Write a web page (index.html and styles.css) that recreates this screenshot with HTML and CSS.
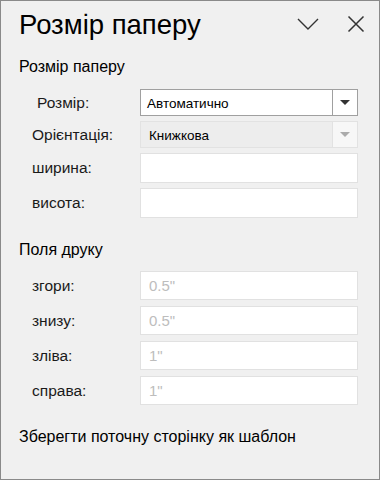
FILE: index.html
```html
<!DOCTYPE html>
<html lang="uk">
<head>
  <meta charset="UTF-8">
  <meta name="viewport" content="width=device-width, initial-scale=1.0">
  <title>Розмір паперу</title>
  <link rel="stylesheet" href="styles.css">
</head>
<body>
  <div class="panel">
    <!-- Заголовок панелі -->
    <div class="panel-header">
      <h1 class="panel-title">Розмір паперу</h1>
      <button class="icon-btn chevron" title="Параметри">
        <svg width="24" height="20" viewBox="0 0 24 20"><polyline points="2,5 12,15 22,5" fill="none" stroke="#333" stroke-width="1.4"/></svg>
      </button>
      <button class="icon-btn close" title="Закрити">
        <svg width="20" height="20" viewBox="0 0 20 20"><path d="M2.5 2.5 L17.5 17.5 M17.5 2.5 L2.5 17.5" fill="none" stroke="#333" stroke-width="1.5"/></svg>
      </button>
    </div>

    <!-- Розмір паперу -->
    <h2 class="section-title">Розмір паперу</h2>
    <div class="form-grid size-grid">
      <label class="field-label indent">Розмір:</label>
      <div class="combo">
        <span class="combo-value">Автоматично</span>
        <span class="combo-arrow"><span class="tri"></span></span>
      </div>

      <label class="field-label">Орієнтація:</label>
      <div class="combo disabled">
        <span class="combo-value">Книжкова</span>
        <span class="combo-arrow"><span class="tri"></span></span>
      </div>

      <label class="field-label">ширина:</label>
      <input class="text-field tall" type="text">

      <label class="field-label">висота:</label>
      <input class="text-field tall" type="text">
    </div>

    <!-- Поля друку -->
    <h2 class="section-title margins-title">Поля друку</h2>
    <div class="form-grid margin-grid">
      <label class="field-label">згори:</label>
      <input class="text-field" type="text" placeholder="0.5&quot;">

      <label class="field-label">знизу:</label>
      <input class="text-field" type="text" placeholder="0.5&quot;">

      <label class="field-label">зліва:</label>
      <input class="text-field" type="text" placeholder="1&quot;">

      <label class="field-label">справа:</label>
      <input class="text-field" type="text" placeholder="1&quot;">
    </div>

    <a href="#" class="save-link">Зберегти поточну сторінку як шаблон</a>
  </div>
</body>
</html>
```

FILE: styles.css
```css
/* Загальне */
body {
  margin: 0;
  font-family: 'Liberation Sans', Arial, sans-serif;
  color: #000;
  background: #f0f0f0;
}

.panel {
  box-sizing: border-box;
  width: 380px;
  height: 480px;
  border: 1px solid #8a8a8a;
  background: #f0f0f0;
  display: flex;
  flex-direction: column;
}

/* Заголовок */
.panel-header {
  height: 48px;
  display: flex;
  align-items: center;
  padding: 0 13px 0 18px;
}

.panel-title {
  margin: 0;
  flex: 1;
  font-size: 27.5px;
  font-weight: normal;
  line-height: 32px;
}

.icon-btn {
  border: none;
  background: none;
  padding: 0;
  display: flex;
  cursor: pointer;
}

.chevron {
  margin-right: 26px;
  margin-top: -2px;
}

.close {
  margin-top: -2px;
}

/* Розділи */
.section-title {
  margin: 8px 0 0 18px;
  font-size: 16px;
  font-weight: normal;
  line-height: 20px;
}

.margins-title {
  margin-top: 22px;
}

.form-grid {
  display: grid;
  grid-template-columns: 108px 1fr;
  align-items: center;
  padding: 0 21px 0 31px;
}

.size-grid {
  margin-top: 12px;
  row-gap: 5px;
}

.margin-grid {
  margin-top: 11px;
  row-gap: 6px;
}

.field-label {
  font-size: 15.5px;
  color: #1a1a1a;
}

.field-label.indent {
  padding-left: 5px;
}

/* Комбобокс */
.combo {
  box-sizing: border-box;
  height: 27px;
  display: flex;
  border: 1px solid #a0a0a0;
  background: #fff;
}

.combo-value {
  flex: 1;
  display: flex;
  align-items: center;
  padding-left: 6px;
  font-size: 13.5px;
  padding-top: 2px;
}

.combo-arrow {
  width: 24px;
  border-left: 1px solid #a0a0a0;
  display: flex;
  align-items: center;
  justify-content: center;
}

.tri {
  width: 0;
  height: 0;
  border-left: 5px solid transparent;
  border-right: 5px solid transparent;
  border-top: 5px solid #333;
}

.combo.disabled {
  border-color: #e2e2e2;
  background: #ededed;
}

.combo.disabled .combo-value {
  padding-left: 8px;
}

.combo.disabled .combo-arrow {
  border-left-color: #e2e2e2;
  background: #f7f7f7;
}

.combo.disabled .tri {
  border-top-color: #ababab;
}

/* Поля вводу */
.text-field {
  box-sizing: border-box;
  width: 100%;
  height: 29px;
  margin: 0;
  border: 1px solid #e1e1e1;
  background: #fff;
  padding: 0 8px;
  font-family: 'Liberation Sans', Arial, sans-serif;
  font-size: 15px;
  outline: none;
}

.text-field.tall {
  height: 30px;
}

.text-field::placeholder {
  color: #bdbdbd;
}

/* Посилання */
.save-link {
  margin: 22px 0 0 18px;
  font-size: 16px;
  line-height: 20px;
  color: #000;
  text-decoration: none;
}
```
